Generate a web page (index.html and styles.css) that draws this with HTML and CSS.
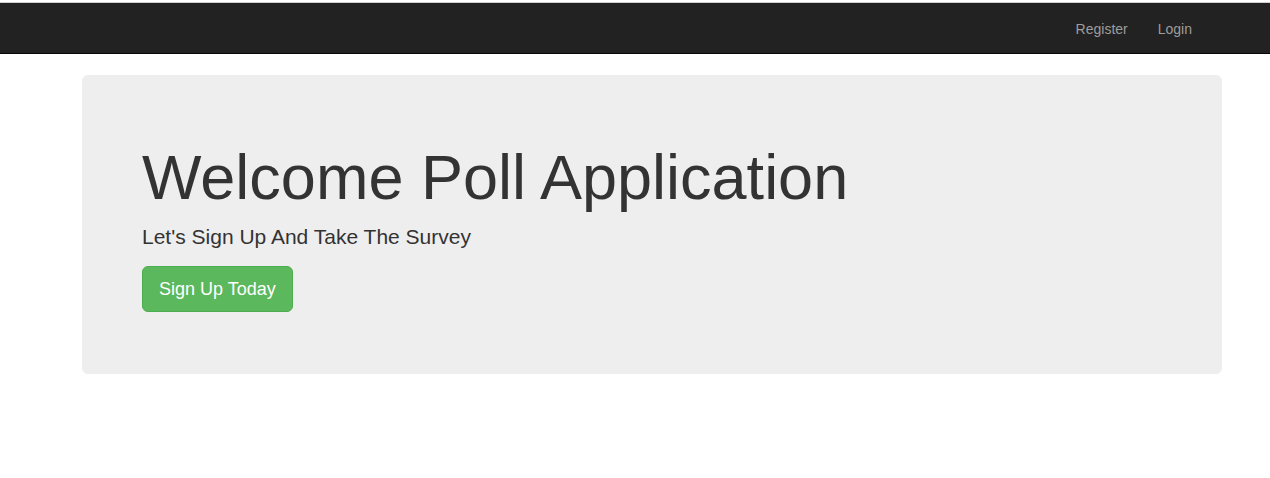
FILE: index.html
```html
<!DOCTYPE html>
<html>
<head>
<meta charset="utf-8">
<title>Poll Application</title>
<link rel="stylesheet" href="styles.css">
</head>
<body>
<nav class="navbar">
  <div class="nav-inner">
    <ul class="nav-links">
      <li><a href="#">Register</a></li>
      <li><a href="#">Login</a></li>
    </ul>
  </div>
</nav>
<div class="container">
  <div class="jumbotron">
    <h1>Welcome Poll Application</h1>
    <p class="lead">Let's Sign Up And Take The Survey</p>
    <p class="actions"><a class="btn" href="#">Sign Up Today</a></p>
  </div>
</div>
</body>
</html>
```

FILE: styles.css
```css
* { box-sizing: border-box; }
html, body { margin: 0; padding: 0; }
body {
  padding-top: 2px;
  background: #fff;
  font-family: "Liberation Sans", Arial, Helvetica, sans-serif;
  font-size: 14px;
  line-height: 1.42857;
  color: #333;
}
.navbar {
  background: #222;
  border-top: 1px solid #cfcfcf;
  border-bottom: 1px solid #080808;
  height: 52px;
  margin-bottom: 21px;
}
.nav-inner {
  width: 1140px;
  margin-left: 82px;
  display: flex;
  justify-content: flex-end;
}
.nav-links {
  list-style: none;
  margin: 0 15px 0 0;
  padding: 0;
  display: flex;
}
.nav-links a {
  display: block;
  padding: 16px 15px 14px;
  line-height: 20px;
  color: #9d9d9d;
  text-decoration: none;
}
.container {
  width: 1140px;
  margin-left: 82px;
}
.jumbotron {
  background: #eee;
  border-radius: 6px;
  padding: 48px 60px 47px;
}
.jumbotron h1 {
  margin: 20px 0 10px;
  font-size: 63px;
  font-weight: 500;
  line-height: 1.1;
  color: #333;
}
.jumbotron p {
  margin: 0 0 15px;
  font-size: 21px;
  font-weight: 200;
}
.jumbotron .lead {
  margin-bottom: 14px;
}
.jumbotron .actions {
  line-height: 1;
  display: flex;
}
.btn {
  display: inline-block;
  padding: 11px 16px 9px;
  font-size: 18px;
  line-height: 1.3333;
  border-radius: 6px;
  color: #fff;
  background: #5cb85c;
  border: 1px solid #4cae4c;
  text-decoration: none;
}
```
